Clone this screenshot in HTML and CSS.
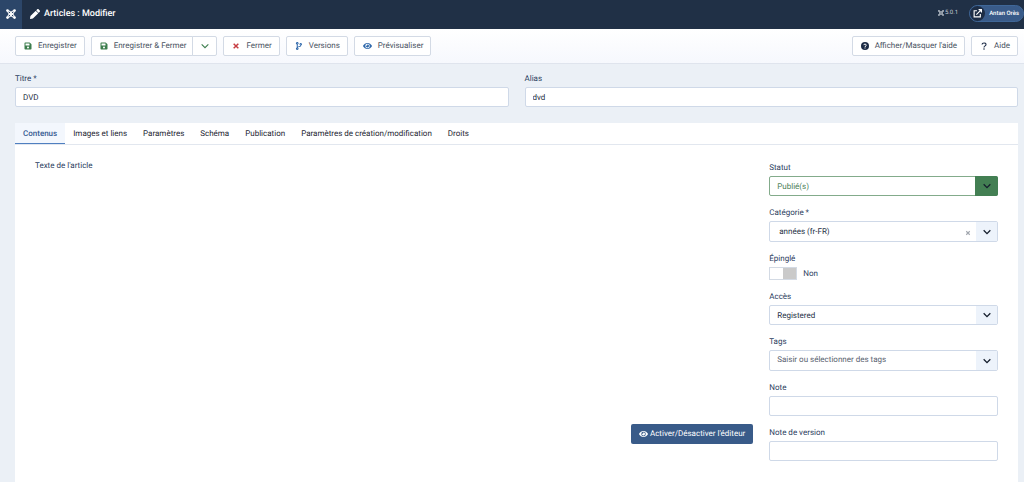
FILE: index.html
```html
<!DOCTYPE html>
<html lang="fr">
<head>
<meta charset="utf-8">
<meta name="viewport" content="width=device-width, initial-scale=1">
<title>Articles : Modifier</title>
<link rel="stylesheet" href="styles.css">
</head>
<body>
<svg class="sprite" aria-hidden="true">
  <symbol id="joomla" viewBox="0 0 24 24"><g fill="none" stroke="currentColor" stroke-width="2.4" stroke-linejoin="round"><path d="M4 4Q8 4 12 7.5 16 4 20 4 20 8 16.500 12 20 16 20 20 16 20 12 16.500 8 20 4 20 4 16 7.500 12 4 8 4 4z"/><path d="M5.500 8 16 18.500M8 5.500 18.500 16M18.500 8 8 18.500M16 5.500 5.500 16"/></g><g fill="currentColor"><circle cx="3.600" cy="3.600" r="3.300"/><circle cx="20.400" cy="3.600" r="3.300"/><circle cx="3.600" cy="20.400" r="3.300"/><circle cx="20.400" cy="20.400" r="3.300"/></g></symbol>
  <symbol id="pencil" viewBox="0 0 512 512"><path fill="currentColor" d="M498 142l-46 46c-5 5-13 5-17 0L324 77c-5-5-5-12 0-17l46-46c19-19 49-19 68 0l60 60c19 19 19 49 0 68zM284 100 22 362 0 484c-3 16 12 30 28 28l122-22 262-262c5-5 5-12 0-17L301 100c-5-5-12-5-17 0z"/></symbol>
  <symbol id="save" viewBox="0 0 448 512"><path fill="currentColor" fill-rule="evenodd" d="M434 130 350 46a48 48 0 0 0-34-14H48a48 48 0 0 0-48 48v352a48 48 0 0 0 48 48h352a48 48 0 0 0 48-48V164a48 48 0 0 0-14-34zM64 108q0-12 12-12h232q12 0 12 12v104q0 12-12 12H76q-12 0-12-12zM224 416a64 64 0 1 1 0-128 64 64 0 0 1 0 128z"/></symbol>
  <symbol id="chevron" viewBox="0 0 12 12"><path fill="none" stroke="currentColor" stroke-width="2" d="M1 3.5 6 8.5 11 3.5"/></symbol>
  <symbol id="chevron-thin" viewBox="0 0 12 12"><path fill="none" stroke="currentColor" stroke-width="1.6" d="M1 3.5 6 8.5 11 3.5"/></symbol>
  <symbol id="close" viewBox="0 0 12 12"><path stroke="currentColor" stroke-width="2.2" d="M2.5 2.5 9.5 9.5M9.5 2.5 2.5 9.5"/></symbol>
  <symbol id="branch" viewBox="0 0 384 512"><path fill="currentColor" fill-rule="evenodd" d="M384 144a80 80 0 1 0-112 73c-1 25-5 34-30 46-28 11-80 10-130 36V155a80 80 0 1 0-64 0v202a80 80 0 1 0 73 3c9-27 50-26 100-37 67-14 112-40 115-109a80 80 0 0 0 48-70zM80 56a24 24 0 1 1 0 48 24 24 0 0 1 0-48zm0 400a24 24 0 1 1 0-48 24 24 0 0 1 0 48zM304 120a24 24 0 1 1 0 48 24 24 0 0 1 0-48z"/></symbol>
  <symbol id="eye" viewBox="0 0 576 512"><path fill="currentColor" fill-rule="evenodd" d="M572 241C518 136 411 64 288 64S58 136 4 241a32 32 0 0 0 0 30c54 105 161 177 284 177s230-72 284-177a32 32 0 0 0 0-30zM288 400a144 144 0 1 1 0-288 144 144 0 0 1 0 288zm0-240a95 95 0 0 0-25 4 48 48 0 0 1-67 67 96 96 0 1 0 92-71z"/></symbol>
  <symbol id="help-circle" viewBox="0 0 16 16"><circle cx="8" cy="8" r="8" fill="currentColor"/><path fill="none" stroke="#fff" stroke-width="2" d="M5.3 6.2C5.5 3.6 10.6 3.6 10.6 6.3 10.6 8 8 7.8 8 10M8 11v2"/></symbol>
  <symbol id="question" viewBox="0 0 16 16"><path fill="none" stroke="currentColor" stroke-width="2.2" d="M4 5.2C4.2.8 12 .8 12 5 12 8 8 7.4 8 11M8 12.6v2.8"/></symbol>
  <symbol id="external" viewBox="0 0 16 16"><path fill="none" stroke="currentColor" stroke-width="2" d="M7 3H2v11h11V9M6 10l8-8"/><path fill="currentColor" d="M9 0h7v7z"/></symbol>
</svg>

<header class="header">
  <a class="logo" href="#" aria-label="Accueil"><svg class="logo-icon"><use href="#joomla"/></svg></a>
  <h1 class="page-title"><svg class="title-icon"><use href="#pencil"/></svg>Articles : Modifier</h1>
  <div class="version"><svg class="version-icon"><use href="#joomla"/></svg>5.0.1</div>
  <a class="site-link" href="#"><span class="site-badge"><svg class="site-icon"><use href="#external"/></svg></span>Antan Orès</a>
</header>

<div class="toolbar">
  <button class="btn" type="button"><svg class="icon green"><use href="#save"/></svg>Enregistrer</button>
  <div class="btn-group">
    <button class="btn" type="button"><svg class="icon green"><use href="#save"/></svg>Enregistrer &amp; Fermer</button>
    <button class="btn btn-toggle" type="button" aria-label="Plus d'actions"><svg class="icon green"><use href="#chevron-thin"/></svg></button>
  </div>
  <button class="btn" type="button"><svg class="icon red"><use href="#close"/></svg>Fermer</button>
  <button class="btn" type="button"><svg class="icon blue"><use href="#branch"/></svg>Versions</button>
  <button class="btn" type="button"><svg class="icon icon-wide blue"><use href="#eye"/></svg>Prévisualiser</button>
  <button class="btn push" type="button"><svg class="icon navy"><use href="#help-circle"/></svg>Afficher/Masquer l'aide</button>
  <button class="btn" type="button"><svg class="icon navy"><use href="#question"/></svg>Aide</button>
</div>

<form class="content">
  <div class="title-row">
    <div class="field"><label for="title">Titre *</label><input class="control" id="title" type="text" value="DVD"></div>
    <div class="field"><label for="alias">Alias</label><input class="control" id="alias" type="text" value="dvd"></div>
  </div>

  <div class="card">
    <div class="tabs" role="tablist">
      <button class="tab tab-active" type="button" role="tab" aria-selected="true">Contenus</button>
      <button class="tab" type="button" role="tab">Images et liens</button>
      <button class="tab" type="button" role="tab">Paramètres</button>
      <button class="tab" type="button" role="tab">Schéma</button>
      <button class="tab" type="button" role="tab">Publication</button>
      <button class="tab" type="button" role="tab">Paramètres de création/modification</button>
      <button class="tab" type="button" role="tab">Droits</button>
    </div>
    <div class="panel" role="tabpanel">
      <div class="editor">
        <label for="text">Texte de l'article</label>
        <textarea class="editor-text" id="text"></textarea>
        <button class="btn-primary" type="button"><svg class="icon icon-wide"><use href="#eye"/></svg>Activer/Désactiver l'éditeur</button>
      </div>
      <div class="sidebar">
        <div class="field"><label for="status">Statut</label>
          <div class="select select-green"><select class="control" id="status"><option>Publié(s)</option></select><span class="arrow"><svg class="icon"><use href="#chevron"/></svg></span></div></div>
        <div class="field"><label for="category">Catégorie *</label>
          <div class="select"><select class="control control-tall control-choice" id="category"><option>années (fr-FR)</option></select><button class="clear" type="button" aria-label="Effacer"><svg class="clear-icon"><use href="#close"/></svg></button><span class="arrow"><svg class="icon"><use href="#chevron"/></svg></span></div></div>
        <div class="field"><label for="featured">Épinglé</label>
          <div class="switch-row"><input class="switch" id="featured" type="checkbox" role="switch"><span>Non</span></div></div>
        <div class="field"><label for="access">Accès</label>
          <div class="select"><select class="control" id="access"><option>Registered</option></select><span class="arrow"><svg class="icon"><use href="#chevron"/></svg></span></div></div>
        <div class="field"><label for="tags">Tags</label>
          <div class="select"><input class="control control-tall control-tags" id="tags" type="text" placeholder="Saisir ou sélectionner des tags"><span class="arrow"><svg class="icon"><use href="#chevron"/></svg></span></div></div>
        <div class="field"><label for="note">Note</label><input class="control" id="note" type="text"></div>
        <div class="field"><label for="version-note">Note de version</label><input class="control" id="version-note" type="text"></div>
      </div>
    </div>
  </div>
</form>
</body>
</html>
```
FILE: styles.css
```css
* { box-sizing: border-box; }

body {
  display: flex;
  flex-direction: column;
  min-height: 100vh;
  margin: 0;
  background: #ebf0f6;
  color: #2c4060;
  font: 8px/12px Roboto, "Liberation Sans", sans-serif;
  text-rendering: geometricPrecision;
}

button, input, select, textarea {
  margin: 0;
  font: inherit;
  color: inherit;
  text-rendering: inherit;
}
button { cursor: pointer; }
a { color: inherit; text-decoration: none; }
.sprite { display: none; }

.icon { flex: none; width: 8px; height: 8px; }
.icon-wide { width: 9px; }
.green { color: #3c7d4c; }
.red { color: #c63b40; }
.blue { color: #2f68ab; }
.navy { color: #1c2b45; }

/* Header */
.header {
  display: flex;
  align-items: center;
  height: 29px;
  background: #203046;
  color: #fff;
}
.logo {
  display: grid;
  place-items: center;
  width: 22px;
  height: 100%;
  padding-bottom: 2px;
  background: #2c4669;
}
.logo-icon { width: 10px; height: 10px; }
.page-title {
  display: flex;
  align-items: center;
  gap: 4px;
  margin: 0 auto 0 8px;
  padding-bottom: 2px;
  font-size: 9px;
  font-weight: 500;
}
.title-icon { width: 10px; height: 10px; }
.version {
  display: flex;
  align-items: center;
  gap: 1px;
  margin-right: 11px;
  padding-bottom: 3px;
  color: #c5cbd4;
  font-size: 6px;
}
.version-icon { width: 6px; height: 6px; }
.site-link {
  display: flex;
  align-items: center;
  gap: 4px;
  height: 17px;
  margin-bottom: 2px;
  padding-right: 4px;
  border: 1px solid #3f6798;
  border-radius: 9px;
  background: #395b89;
  font-size: 6px;
  font-weight: 500;
}
.site-badge {
  display: grid;
  place-items: center;
  width: 15px;
  height: 15px;
  border-radius: 50%;
  background: #1d2d45;
}
.site-icon { width: 9px; height: 9px; }

/* Toolbar */
.toolbar {
  display: flex;
  align-items: center;
  gap: 6px;
  height: 35px;
  padding: 0 6px 1px 15px;
  border-bottom: 1px solid #dfe4ed;
  background: linear-gradient(#fff, #f6f8fd);
}
.btn {
  display: flex;
  align-items: center;
  gap: 6px;
  height: 20px;
  padding: 0 7px 0 8px;
  border: 1px solid #d3dae5;
  border-radius: 2px;
  background: #fff;
  color: #495261;
}
.btn-group { display: flex; }
.btn-group .btn:first-child { padding-right: 6px; border-radius: 2px 0 0 2px; }
.btn-toggle { margin-left: -1px; border-radius: 0 2px 2px 0; }
.push { margin-left: auto; }

/* Form */
.content {
  display: flex;
  flex: 1;
  flex-direction: column;
  gap: 16px;
  padding: 8px 6px 0 15px;
}
.title-row {
  display: grid;
  grid-template-columns: 1fr 1fr;
  gap: 16px;
}
.field { display: flex; flex-direction: column; gap: 2px; line-height: 13px; }
.control {
  width: 100%;
  height: 20px;
  padding: 0 7px;
  border: 1px solid #cfd9e8;
  border-radius: 2px;
  outline: 0;
  background: #fff;
  color: #273246;
  appearance: none;
}
.control-tall { height: 21px; }
.control-choice { padding-left: 9px; }
.control-tags { padding-bottom: 3px; }
.control::placeholder { color: #59626f; opacity: 1; }

.select { position: relative; display: flex; }
.arrow {
  position: absolute;
  inset: 1px 1px 1px auto;
  display: grid;
  place-items: center;
  width: 21px;
  background: #edf3fb;
  color: #17202f;
  pointer-events: none;
}
.select-green .control { border-color: #83ab8b; color: #4c8158; }
.select-green .arrow {
  inset: 0 0 0 auto;
  width: 23px;
  border-radius: 0 2px 2px 0;
  background: #437f53;
}
.clear {
  position: absolute;
  inset: 2px 26px 0 auto;
  display: grid;
  place-items: center;
  width: 8px;
  padding: 0;
  border: 0;
  background: none;
  color: #a0a5ad;
}
.clear-icon { width: 6px; height: 6px; }

.switch-row { display: flex; align-items: center; gap: 6px; height: 13px; }
.switch {
  width: 28px;
  height: 13px;
  border: 1px solid #d3dae4;
  appearance: none;
  background: linear-gradient(90deg, #fff 50%, #cacaca 50%);
}
.switch:checked { background: linear-gradient(90deg, #437f53 50%, #fff 50%); }

/* Tabbed card */
.card {
  display: flex;
  flex: 1;
  flex-direction: column;
  background: #fff;
}
.tabs { display: flex; border-bottom: 1px solid #e2e7ef; }
.tab {
  height: 21px;
  padding: 0 8px;
  border: 0;
  background: none;
  color: #1d2531;
}
.tab-active {
  background: #f3f7fd;
  box-shadow: inset 0 -1px #4f7fc0;
  color: #365b91;
  font-weight: 500;
}
.panel {
  display: grid;
  grid-template-columns: repeat(12, 1fr);
  column-gap: 16px;
  padding: 15px 20px 20px;
}
.editor {
  display: flex;
  grid-column: span 9;
  flex-direction: column;
  margin-bottom: 17px;
}
.editor-text {
  flex: 1;
  padding: 0;
  border: 0;
  outline: 0;
  background: none;
  resize: none;
}
.btn-primary {
  display: flex;
  align-items: center;
  align-self: flex-end;
  gap: 2px;
  height: 20px;
  padding: 0 8px;
  border: 0;
  border-radius: 2px;
  background: #395b89;
  color: #fff;
}
.sidebar {
  display: flex;
  grid-column: span 3;
  flex-direction: column;
  gap: 10px;
  padding-top: 1px;
}
```
